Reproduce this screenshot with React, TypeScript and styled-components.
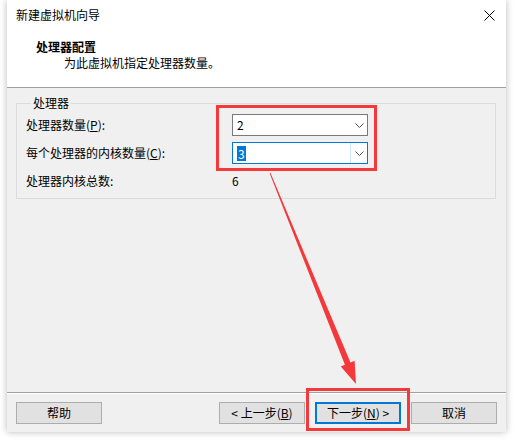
import React from 'react';
import styled, { createGlobalStyle } from 'styled-components';

const GlobalStyle = createGlobalStyle`
  html, body {
    margin: 0;
    padding: 0;
    background: #ffffff;
  }
  body {
    font-family: "Noto Sans CJK SC", "Liberation Sans", sans-serif;
    font-size: 12px;
    color: #000;
  }
`;

const Page = styled.div`
  position: relative;
  width: 513px;
  height: 440px;
  overflow: hidden;
`;

const Window = styled.div`
  margin-left: 7px;
  width: 499px;
  height: 432px;
  display: flex;
  flex-direction: column;
  background: #f0f0f0;
  box-shadow: 0 0 7px rgba(0, 0, 0, 0.28);
`;

const TopArea = styled.div`
  background: #ffffff;
  height: 87px;
  border-bottom: 1px solid #a0a0a0;
  display: flex;
  flex-direction: column;
`;

const TitleBar = styled.div`
  height: 30px;
  padding: 0 11px 0 9px;
  display: flex;
  align-items: center;
  justify-content: space-between;
  line-height: 16px;
`;

const Header = styled.div`
  padding-left: 29px;
  padding-top: 9px;
  display: flex;
  flex-direction: column;
`;

const HeaderTitle = styled.div`
  font-weight: bold;
  line-height: 16px;
`;

const HeaderSub = styled.div`
  padding-left: 28px;
  line-height: 16px;
`;

const Body = styled.div`
  flex: 1;
  padding: 7px 10px 0 9px;
`;

const Group = styled.fieldset`
  margin: 0;
  padding: 3px 0 6px 9px;
  border: 1px solid #dcdcdc;
  min-width: 0;
`;

const Legend = styled.legend`
  margin-left: 5px;
  padding: 0 2px;
  line-height: 16px;
`;

const Rows = styled.div`
  display: grid;
  grid-template-columns: 206px 136px;
  grid-auto-rows: 22px;
  row-gap: 6px;
  align-items: center;
`;

const Label = styled.div`
  line-height: 16px;
`;

const Key = styled.span`
  text-decoration: underline;
`;

const Combo = styled.div<{ $focused?: boolean }>`
  height: 22px;
  box-sizing: border-box;
  border: 1px solid ${p => (p.$focused ? '#0078d7' : '#7a7a7a')};
  background: #fff;
  display: flex;
  align-items: center;
`;

const ComboValue = styled.div`
  flex: 1;
  padding-left: 4px;
  line-height: 16px;
  display: flex;
  align-items: center;
`;

const Selected = styled.span`
  background: #0078d7;
  color: #fff;
  line-height: 15px;
  padding: 0 1px;
`;

const ComboButton = styled.div<{ $focused?: boolean }>`
  width: 16px;
  height: 100%;
  display: flex;
  align-items: center;
  justify-content: center;
  border-left: 1px solid ${p => (p.$focused ? '#cce4f7' : 'transparent')};
`;

const Value = styled.div`
  line-height: 16px;
`;

const Footer = styled.div`
  height: 40px;
  box-sizing: border-box;
  border-top: 1px solid #a0a0a0;
  box-shadow: inset 0 1px 0 #ffffff;
  padding: 9px 9px 0 9px;
  display: flex;
  align-items: flex-start;
`;

const Spacer = styled.div`
  flex: 1;
`;

const Button = styled.button<{ $primary?: boolean; $gap?: number }>`
  width: 86px;
  height: 22px;
  margin-left: ${p => p.$gap ?? 0}px;
  padding: 0;
  box-sizing: border-box;
  font-family: "Noto Sans CJK SC", "Liberation Sans", sans-serif;
  font-size: 12px;
  line-height: 16px;
  color: #000;
  background: #e1e1e1;
  border: ${p => (p.$primary ? '2px solid #0078d7' : '1px solid #adadad')};
`;

const Overlay = styled.svg`
  position: absolute;
  left: 0;
  top: 0;
  pointer-events: none;
`;

const Chevron = () => (
  <svg width="9" height="5" viewBox="0 0 9 5">
    <path d="M0.5 0.5 L4.5 4.5 L8.5 0.5" fill="none" stroke="#505050" strokeWidth="1" />
  </svg>
);

const CloseIcon = () => (
  <svg width="11" height="11" viewBox="0 0 11 11">
    <path d="M0.5 0.5 L10.5 10.5 M10.5 0.5 L0.5 10.5" stroke="#000" strokeWidth="1" />
  </svg>
);

// tapered arrow from the combo boxes down to the next button
const arrowPoints = (() => {
  const sx = 270, sy = 173, tx = 356, ty = 384;
  const dx = tx - sx, dy = ty - sy;
  const len = Math.hypot(dx, dy);
  const ux = dx / len, uy = dy / len;
  const px = uy, py = -ux;
  const base = len - 22;
  const bx = sx + ux * base, by = sy + uy * base;
  const pt = (x: number, y: number) => `${x.toFixed(1)},${y.toFixed(1)}`;
  return [
    pt(sx + px * 0.4, sy + py * 0.4),
    pt(bx + px * 3, by + py * 3),
    pt(bx + px * 7.5, by + py * 7.5),
    pt(tx, ty),
    pt(bx - px * 7.5, by - py * 7.5),
    pt(bx - px * 3, by - py * 3),
    pt(sx - px * 0.4, sy - py * 0.4),
  ].join(' ');
})();

export default function App() {
  return (
    <>
      <GlobalStyle />
      <Page>
        <Window>
          <TopArea>
            <TitleBar>
              <span>新建虚拟机向导</span>
              <CloseIcon />
            </TitleBar>
            <Header>
              <HeaderTitle>处理器配置</HeaderTitle>
              <HeaderSub>为此虚拟机指定处理器数量。</HeaderSub>
            </Header>
          </TopArea>
          <Body>
            <Group>
              <Legend>处理器</Legend>
              <Rows>
                <Label>
                  处理器数量(<Key>P</Key>):
                </Label>
                <Combo>
                  <ComboValue>2</ComboValue>
                  <ComboButton>
                    <Chevron />
                  </ComboButton>
                </Combo>
                <Label>
                  每个处理器的内核数量(<Key>C</Key>):
                </Label>
                <Combo $focused>
                  <ComboValue>
                    <Selected>3</Selected>
                  </ComboValue>
                  <ComboButton $focused>
                    <Chevron />
                  </ComboButton>
                </Combo>
                <Label>处理器内核总数:</Label>
                <Value>6</Value>
              </Rows>
            </Group>
          </Body>
          <Footer>
            <Button>帮助</Button>
            <Spacer />
            <Button>
              &lt; 上一步(<Key>B</Key>)
            </Button>
            <Button $primary $gap={10}>
              下一步(<Key>N</Key>) &gt;
            </Button>
            <Button $gap={10}>取消</Button>
          </Footer>
        </Window>
        <Overlay width="513" height="440" viewBox="0 0 513 440">
          <rect x="217.5" y="106.5" width="158" height="63" fill="none" stroke="#f5383a" strokeWidth="3" />
          <rect x="307.5" y="389.5" width="101" height="40" fill="none" stroke="#f5383a" strokeWidth="3" />
          <polygon points={arrowPoints} fill="#f5383a" />
        </Overlay>
      </Page>
    </>
  );
}
